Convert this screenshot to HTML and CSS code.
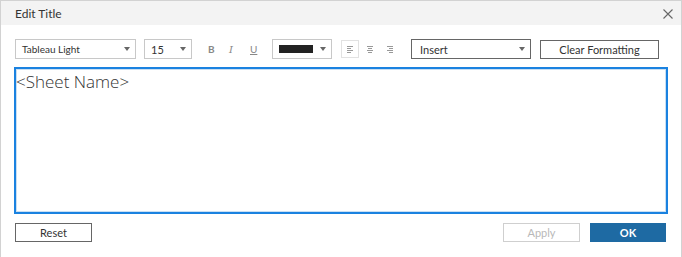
FILE: index.html
```html
<!DOCTYPE html>
<html>
<head>
<meta charset="utf-8">
<link rel="stylesheet" href="styles.css">
</head>
<body>
<div class="dialog">
  <div class="header">
    <span class="title">Edit Title</span>
    <svg class="close" width="10" height="10" viewBox="0 0 10 10"><path d="M0.5 0.5L9.5 9.5M9.5 0.5L0.5 9.5" stroke="#666" stroke-width="1.1" fill="none"/></svg>
  </div>
  <div class="toolbar">
    <div class="select font-select"><span class="label-light">Tableau Light</span><span class="caret"></span></div>
    <div class="select size-select"><span>15</span><span class="caret"></span></div>
    <div class="styles">
      <span class="sty bold">B</span>
      <span class="sty ital">I</span>
      <span class="sty und">U</span>
    </div>
    <div class="select color-select"><span class="swatch"></span><span class="caret"></span></div>
    <div class="aligns">
      <span class="al active"><svg width="6" height="7" viewBox="0 0 6 7"><path d="M0 0.5H6M0 2.5H4M0 4.5H6M0 6.5H4" stroke="#999" stroke-width="1"/></svg></span>
      <span class="al"><svg width="6" height="7" viewBox="0 0 6 7"><path d="M0 0.5H6M1 2.5H5M0 4.5H6M1 6.5H5" stroke="#999" stroke-width="1"/></svg></span>
      <span class="al"><svg width="6" height="7" viewBox="0 0 6 7"><path d="M0 0.5H6M2 2.5H6M0 4.5H6M2 6.5H6" stroke="#999" stroke-width="1"/></svg></span>
    </div>
    <div class="select insert-select"><span>Insert</span><span class="caret"></span></div>
    <button class="btn clear">Clear Formatting</button>
  </div>
  <div class="editor">&lt;Sheet Name&gt;</div>
  <div class="footer">
    <button class="btn reset">Reset</button>
    <div class="right">
      <button class="btn apply">Apply</button>
      <button class="btn ok">OK</button>
    </div>
  </div>
</div>
</body>
</html>
```
FILE: styles.css
```css
* { box-sizing: border-box; }
html, body { margin: 0; padding: 0; background: #fff; }
body { font-family: Lato, "Noto Sans", sans-serif; color: #333; }
.dialog {
  width: 682px;
  height: 257px;
  border: 1px solid #d2d2d2;
  border-bottom: none;
  background: #fff;
}
.header {
  height: 24px;
  background: #f3f3f3;
  display: flex;
  align-items: center;
  justify-content: space-between;
  padding: 0 8px 0 14px;
}
.title { font-size: 12px; color: #333; }
.close { display: block; margin-top: 1px; }
.toolbar {
  display: flex;
  align-items: center;
  height: 20px;
  margin-top: 14px;
  padding-left: 14px;
}
.select {
  height: 20px;
  border: 1px solid #c8c8c8;
  display: flex;
  align-items: center;
  justify-content: space-between;
  padding: 0 5px 0 6px;
  font-size: 11px;
  color: #333;
}
.caret {
  width: 0; height: 0;
  border-left: 3.5px solid transparent;
  border-right: 3.5px solid transparent;
  border-top: 4px solid #666;
}
.font-select { width: 121px; }
.font-select .label-light { font-size: 10px; }
.size-select { width: 48px; margin-left: 8px; }
.styles { display: flex; margin-left: 16px; width: 64px; align-items: center; }
.sty { font-size: 10px; color: #888; width: 21px; }
.bold { font-weight: bold; }
.ital { font-style: italic; font-family: "DejaVu Serif", serif; }
.und { text-decoration: underline; }
.color-select { width: 60px; padding-left: 6px; }
.swatch { width: 34px; height: 8px; background: #222; }
.aligns { display: flex; margin-left: 9px; gap: 2px; }
.al { width: 18px; height: 18px; display: flex; align-items: center; justify-content: center; border: 1px solid transparent; }
.al.active { border-color: #e2e2e2; }
.insert-select { width: 120px; margin-left: 12px; border-color: #666; padding-left: 8px; }
.btn {
  font-family: Lato, "Noto Sans", sans-serif;
  font-size: 11px;
  height: 19px;
  background: #fff;
  border: 1px solid #666;
  color: #333;
  padding: 0;
  display: flex;
  align-items: center;
  justify-content: center;
}
.clear { width: 119px; margin-left: 9px; }
.editor {
  margin: 8px 0 0 13px;
  width: 654px;
  height: 147px;
  border: 2px solid #1a82e0;
  box-shadow: inset 0 0 0 1px #c9dff3;
  font-family: "Open Sans", "Noto Sans", sans-serif;
  font-weight: 300;
  font-size: 17px;
  color: #333;
  padding: 3px 0 0 0;
  line-height: 20px;
}
.footer {
  display: flex;
  justify-content: space-between;
  margin-top: 9px;
  padding: 0 15px 0 14px;
}
.reset { width: 77px; }
.right { display: flex; }
.apply { width: 77px; border-color: #cfcfcf; color: #b8b8b8; }
.ok { width: 76px; margin-left: 10px; background: #1e6aa3; border-color: #1e6aa3; color: #fff; font-weight: bold; }
```
